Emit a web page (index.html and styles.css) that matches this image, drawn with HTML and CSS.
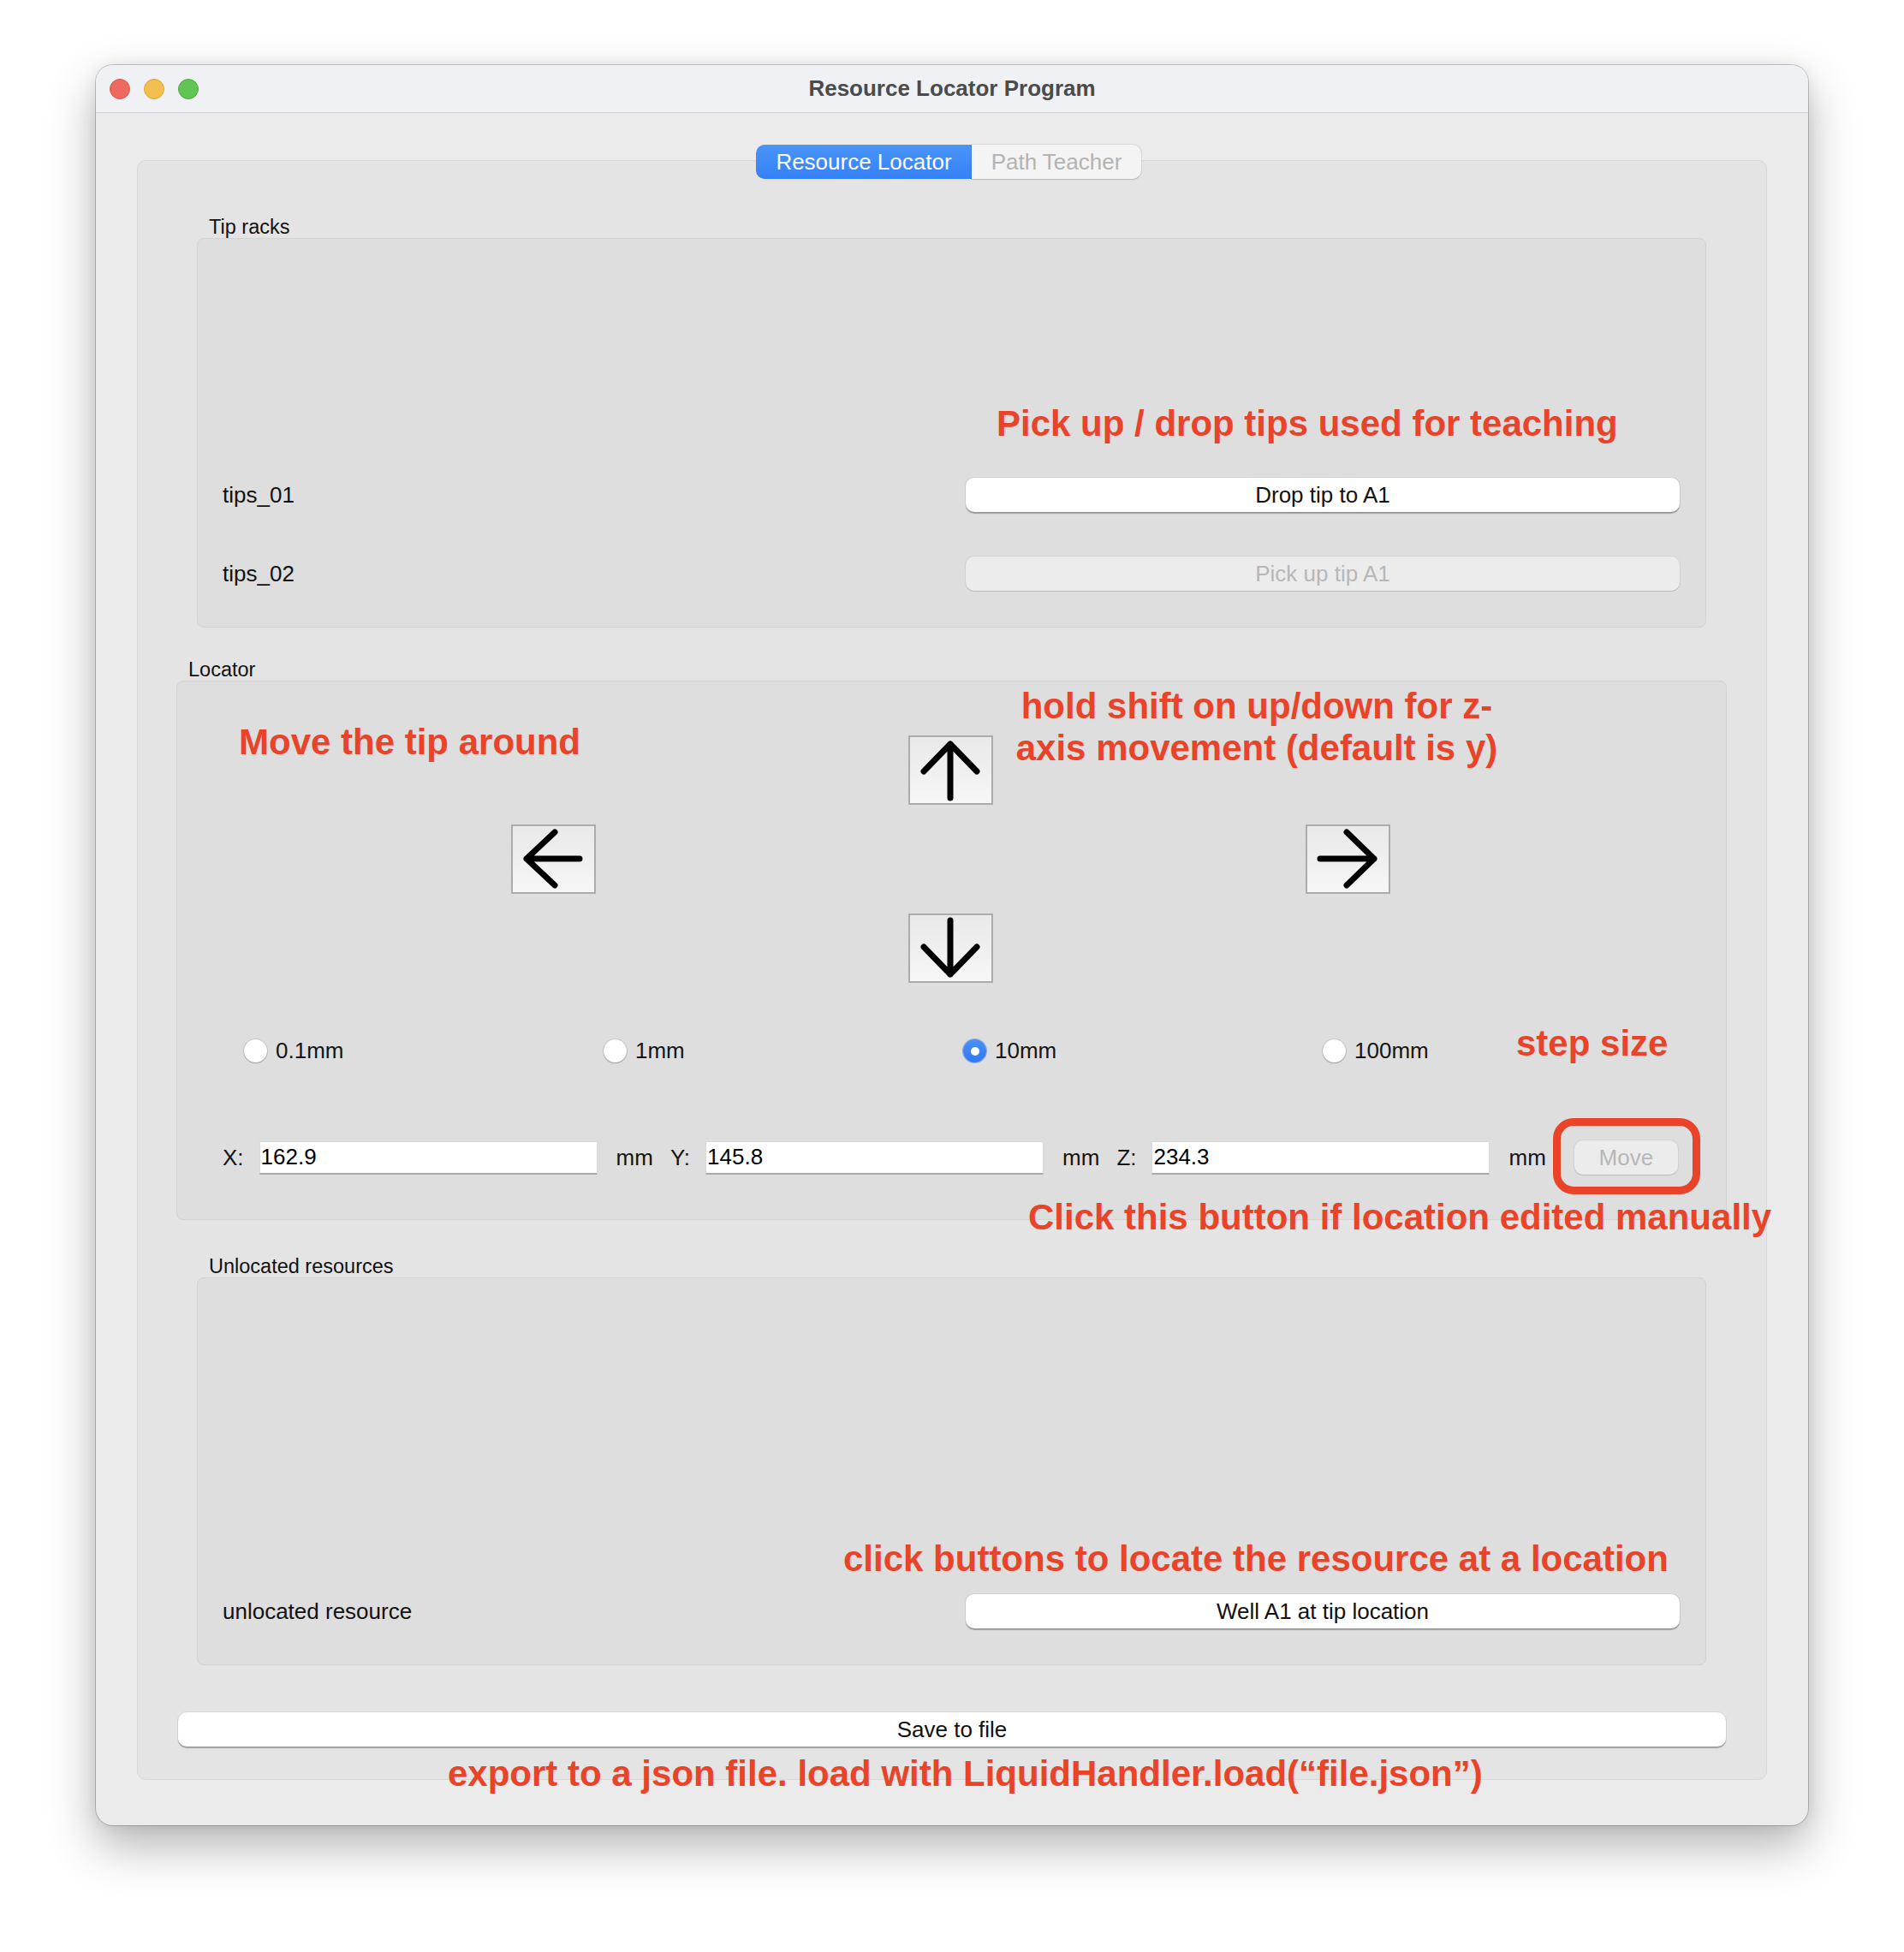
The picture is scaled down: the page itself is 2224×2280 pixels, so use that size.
FILE: index.html
```html
<!DOCTYPE html>
<html>
<head>
<meta charset="utf-8">
<title>Resource Locator Program</title>
<link rel="stylesheet" href="styles.css">
</head>
<body>
<div class="stage">
  <div class="window">
    <div class="titlebar">
      <div class="lights">
        <span class="light red"></span><span class="light yellow"></span><span class="light green"></span>
      </div>
      <div class="title">Resource Locator Program</div>
      <div></div>
    </div>
    <div class="content">
      <div class="tabs">
        <div class="tab active">Resource Locator</div>
        <div class="tab inactive">Path Teacher</div>
      </div>
      <div class="pane">
        <div class="group-title gt-inset">Tip racks</div>
        <div class="group group-inset tips">
          <div class="row"><span class="row-label">tips_01</span><div class="btn">Drop tip to A1</div></div>
          <div class="row"><span class="row-label">tips_02</span><div class="btn disabled">Pick up tip A1</div></div>
        </div>

        <div class="group-title gt-wide">Locator</div>
        <div class="group group-wide locator">
          <div class="arrows">
            <div class="arrow-btn up">
              <svg width="95" height="77" viewBox="2 2 95 77"><path d="M49 73 V10 M18 42 L49 10 L80 42"/></svg>
            </div>
            <div class="arrow-btn left">
              <svg width="95" height="77" viewBox="2 2 95 77"><path d="M80 40 H18 M51 9 L18 40 L51 71"/></svg>
            </div>
            <div class="arrow-btn right">
              <svg width="95" height="77" viewBox="2 2 95 77"><path d="M17 40 H80 M48 9 L80 40 L48 71"/></svg>
            </div>
            <div class="arrow-btn down">
              <svg width="95" height="77" viewBox="2 2 95 77"><path d="M49 8 V71 M18 39 L49 71 L80 39"/></svg>
            </div>
          </div>
          <div class="radios">
            <div class="radio"><span class="radio-dot"></span><span>0.1mm</span></div>
            <div class="radio"><span class="radio-dot"></span><span>1mm</span></div>
            <div class="radio"><span class="radio-dot on"></span><span>10mm</span></div>
            <div class="radio"><span class="radio-dot"></span><span>100mm</span></div>
          </div>
          <div class="coords">
            <span class="axis">X:</span><div class="field">162.9</div><span class="unit">mm</span>
            <span class="axis next">Y:</span><div class="field">145.8</div><span class="unit">mm</span>
            <span class="axis next">Z:</span><div class="field">234.3</div><span class="unit">mm</span>
            <div class="btn disabled move">Move</div>
          </div>
        </div>

        <div class="group-title gt-inset gt-gap">Unlocated resources</div>
        <div class="group group-inset unlocated">
          <div class="row"><span class="row-label">unlocated resource</span><div class="btn">Well A1 at tip location</div></div>
        </div>

        <div class="btn save">Save to file</div>
      </div>
    </div>

    <div class="note n-pick">Pick up / drop tips used for teaching</div>
    <div class="note n-move">Move the tip around</div>
    <div class="note n-hold">hold shift on up/down for z-<br>axis movement (default is y)</div>
    <div class="note n-step">step size</div>
    <div class="highlight"></div>
    <div class="note n-click">Click this button if location edited manually</div>
    <div class="note n-locate">click buttons to locate the resource at a location</div>
    <div class="note n-export">export to a json file. load with LiquidHandler.load(“file.json”)</div>
  </div>
</div>
</body>
</html>
```

FILE: styles.css
```css
html, body {
  margin: 0;
  padding: 0;
}
body {
  width: 2224px;
  height: 2280px;
  overflow: hidden;
  background: #ffffff;
  font-family: "Liberation Sans", Arial, sans-serif;
  color: #151515;
}
.stage {
  padding: 76px 112px 0;
}
.window {
  position: relative;
  width: 2000px;
  height: 2056px;
  border-radius: 20px;
  background: #ebebeb;
  overflow: hidden;
  box-shadow: 0 0 0 1px rgba(0, 0, 0, 0.2), 0 24px 56px rgba(0, 0, 0, 0.3), 0 0 18px rgba(0, 0, 0, 0.08);
}
.titlebar {
  height: 56px;
  box-sizing: border-box;
  border-bottom: 1px solid #d3d3d3;
  background: #eff1f4;
  display: grid;
  grid-template-columns: 1fr auto 1fr;
  align-items: center;
}
.lights {
  display: flex;
  gap: 16px;
  padding-left: 16px;
}
.light {
  width: 24px;
  height: 24px;
  border-radius: 50%;
  box-sizing: border-box;
}
.red { background: #ee6a5e; border: 1px solid #d8574c; }
.yellow { background: #f5bf4f; border: 1px solid #d9a23b; }
.green { background: #61c554; border: 1px solid #4ea842; }
.title {
  font-size: 26px;
  font-weight: bold;
  color: #4b4b4b;
}
.content {
  padding: 37px 48px 0;
}
.tabs {
  position: relative;
  z-index: 1;
  display: flex;
  justify-content: center;
  height: 40px;
  padding-right: 8px;
}
.tab {
  height: 40px;
  box-sizing: border-box;
  display: flex;
  align-items: center;
  justify-content: center;
  font-size: 26px;
}
.tab.active {
  width: 252px;
  background: linear-gradient(#4b94f9, #3580f6);
  color: #ffffff;
  border-radius: 10px 0 0 10px;
}
.tab.inactive {
  width: 198px;
  background: #f4f4f4;
  color: #b3b3b3;
  border-radius: 0 10px 10px 0;
  box-shadow: 0 0 0 1px rgba(0, 0, 0, 0.08), 0 1px 1px rgba(0, 0, 0, 0.12);
}
.pane {
  margin-top: -22px;
  border: 1px solid #d8d8d8;
  border-radius: 10px;
  background: #e4e4e4;
  padding: 64px 0 38px;
}
.group-title {
  font-size: 23.5px;
  line-height: 26px;
  color: #111111;
}
.gt-inset { margin-left: 83px; }
.gt-wide { margin-left: 59px; margin-top: 36px; }
.gt-gap { margin-top: 41px; }
.group {
  background: #dedede;
  border: 1px solid #d3d3d3;
  border-radius: 8px;
}
.group-inset { margin: 0 70px 0 69px; }
.group-wide { margin: 0 46px 0 45px; }
.tips {
  padding: 279px 30px 42px 29px;
  display: flex;
  flex-direction: column;
  gap: 52px;
}
.unlocated {
  padding: 369px 30px 42px 29px;
}
.row {
  display: grid;
  grid-template-columns: 1fr 834px;
  align-items: center;
  height: 40px;
}
.row-label {
  font-size: 26px;
  color: #111111;
}
.btn {
  height: 40px;
  box-sizing: border-box;
  border-radius: 10px;
  background: #ffffff;
  color: #111111;
  font-size: 26px;
  display: flex;
  align-items: center;
  justify-content: center;
  box-shadow: 0 0 0 1px rgba(0, 0, 0, 0.05), 0 1.5px 1px rgba(0, 0, 0, 0.28);
}
.btn.disabled {
  background: #ececec;
  color: #b7b7b7;
  box-shadow: 0 0 0 1px rgba(0, 0, 0, 0.04), 0 1px 1px rgba(0, 0, 0, 0.12);
}
.locator {
  padding: 63px 0 52px;
}
.arrows {
  display: grid;
  grid-template-columns: repeat(3, 99px);
  grid-template-rows: repeat(3, 81px);
  column-gap: 365px;
  row-gap: 23px;
  justify-content: center;
  padding-right: 3px;
}
.arrow-btn {
  box-sizing: border-box;
  border: 2px solid #acacac;
  background: linear-gradient(#e9e9e9, #f6f6f6);
  display: flex;
}
.arrow-btn svg path {
  fill: none;
  stroke: #000000;
  stroke-width: 7;
  stroke-linecap: round;
  stroke-linejoin: round;
}
.up { grid-column: 2; grid-row: 1; }
.left { grid-column: 1; grid-row: 2; }
.right { grid-column: 3; grid-row: 2; }
.down { grid-column: 2; grid-row: 3; }
.radios {
  display: grid;
  grid-template-columns: repeat(4, 420px);
  align-items: center;
  height: 28px;
  margin-top: 64px;
  padding-left: 78px;
}
.radio {
  display: flex;
  align-items: center;
  gap: 10px;
  font-size: 26px;
  color: #151515;
}
.radio-dot {
  width: 27px;
  height: 27px;
  border-radius: 50%;
  background: #ffffff;
  box-shadow: 0 0 0 1px rgba(0, 0, 0, 0.1), 0 1px 1.5px rgba(0, 0, 0, 0.22);
  display: flex;
  align-items: center;
  justify-content: center;
}
.radio-dot.on {
  background: linear-gradient(#4a90f8, #2f78f5);
  box-shadow: 0 0 0 1px rgba(30, 90, 220, 0.4);
}
.radio-dot.on::after {
  content: "";
  width: 10px;
  height: 10px;
  border-radius: 50%;
  background: #ffffff;
}
.coords {
  display: flex;
  align-items: center;
  height: 40px;
  margin-top: 92px;
  padding-left: 53px;
  font-size: 26px;
  color: #151515;
}
.field {
  width: 395px;
  height: 39px;
  margin-left: 18px;
  box-sizing: border-box;
  background: #ffffff;
  border: 1px solid #d9d9d9;
  border-bottom: 2px solid #a9a9a9;
  padding-left: 1px;
  display: flex;
  align-items: center;
  color: #000000;
}
.unit { margin-left: 22px; }
.axis.next { margin-left: 20px; }
.move {
  width: 121px;
  margin-left: 33px;
}
.save {
  margin: 55px 47px 0;
}
.note {
  position: absolute;
  font-size: 42px;
  font-weight: bold;
  line-height: 50px;
  color: #e9432a;
  white-space: nowrap;
}
.n-pick { left: 1052px; top: 394px; }
.n-move { left: 167px; top: 766px; }
.n-hold { left: 1006px; top: 724px; width: 700px; text-align: center; line-height: 49px; }
.n-step { left: 1659px; top: 1118px; }
.n-click { left: 1089px; top: 1321px; }
.n-locate { left: 873px; top: 1720px; }
.n-export { left: 411px; top: 1971px; }
.highlight {
  position: absolute;
  left: 1702px;
  top: 1230px;
  width: 172px;
  height: 89px;
  box-sizing: border-box;
  border: 9px solid #e9432a;
  border-radius: 24px;
}
```
